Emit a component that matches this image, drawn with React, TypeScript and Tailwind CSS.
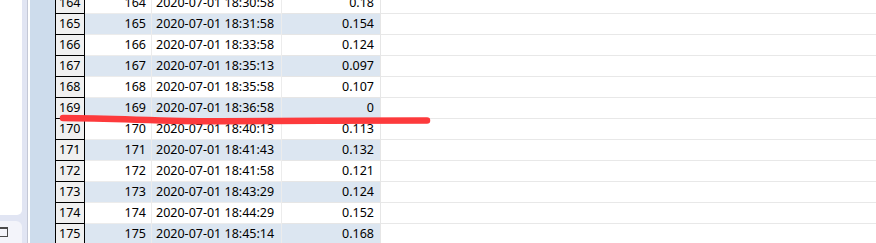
import React from "react";

const rows: [number, string, string][] = [
  [164, "2020-07-01 18:30:58", "0.18"],
  [165, "2020-07-01 18:31:58", "0.154"],
  [166, "2020-07-01 18:33:58", "0.124"],
  [167, "2020-07-01 18:35:13", "0.097"],
  [168, "2020-07-01 18:35:58", "0.107"],
  [169, "2020-07-01 18:36:58", "0"],
  [170, "2020-07-01 18:40:13", "0.113"],
  [171, "2020-07-01 18:41:43", "0.132"],
  [172, "2020-07-01 18:41:58", "0.121"],
  [173, "2020-07-01 18:43:29", "0.124"],
  [174, "2020-07-01 18:44:29", "0.152"],
  [175, "2020-07-01 18:45:14", "0.168"],
];

export default function App() {
  return (
    <div
      className="relative flex h-[243px] w-[876px] overflow-hidden bg-white text-[12.5px] text-black"
      style={{ fontFamily: '"Noto Sans", "Segoe UI", Arial, sans-serif' }}
    >
      {/* left sidebar */}
      <div className="flex w-[27px] shrink-0 bg-[#e1e5f3]">
        <div className="flex w-[22px] flex-col gap-[6px]">
          <div className="h-[215px] rounded-br-[5px] bg-white" />
          <div className="flex-1 rounded-tr-[6px] bg-[#f3f4fa] pt-[6px]">
            <div className="ml-[-3px] h-[10px] w-[11px] border border-t-2 border-[#4a4a4a]" />
          </div>
        </div>
      </div>
      <div className="w-px shrink-0 bg-[#c4c8d6]" />
      <div className="w-[2px] shrink-0 bg-white" />
      <div className="w-[25px] shrink-0 bg-[#cddcec]" />

      {/* table */}
      <div className="flex-1 overflow-hidden">
        <div className="-mt-[7px] flex flex-col">
          {rows.map(([n, dt, v]) => {
            const alt = n % 2 === 1;
            const bg = alt ? "bg-[#dce6f1]" : "bg-white";
            return (
              <div key={n} className="flex h-[21px] leading-[20px]">
                <div className="w-[30px] shrink-0 border-x border-b border-black bg-[#f0f0f0] pl-[3px]">
                  {n}
                </div>
                <div className={`w-[67px] shrink-0 border-r border-b border-[#ececec] pr-[5px] text-right ${bg}`}>
                  {n}
                </div>
                <div className={`w-[130px] shrink-0 border-r border-b border-[#ececec] pl-[4px] ${bg}`}>
                  {dt}
                </div>
                <div className={`w-[99px] shrink-0 border-r border-b border-[#e6e6e6] pr-[6px] text-right ${bg}`}>
                  {v}
                </div>
                <div className="flex-1 border-b border-[#e8e8e8] bg-white" />
              </div>
            );
          })}
        </div>
      </div>

      {/* red hand-drawn mark */}
      <svg
        className="pointer-events-none absolute left-0 top-0"
        width="876"
        height="243"
        viewBox="0 0 876 243"
      >
        <path
          d="M63 118 C 120 118.5, 170 121.5, 220 121.2 S 380 120.5, 427 120.5"
          fill="none"
          stroke="#fd3a3c"
          strokeWidth="6.5"
          strokeLinecap="round"
        />
      </svg>
    </div>
  );
}
